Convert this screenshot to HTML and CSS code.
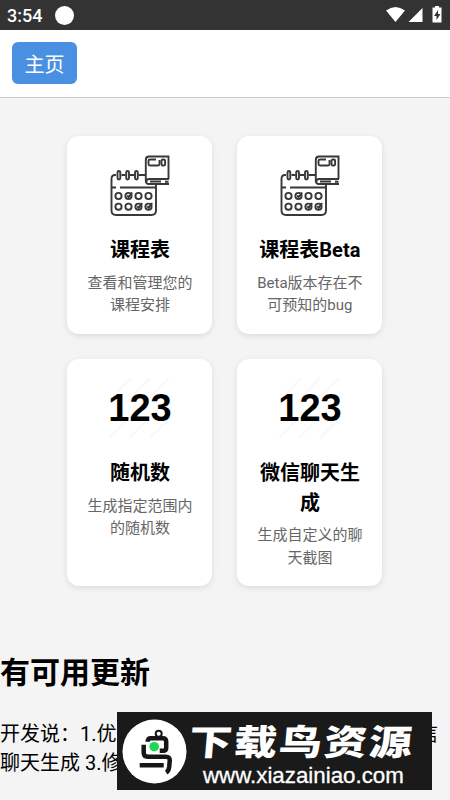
FILE: index.html
```html
<!DOCTYPE html>
<html lang="zh-CN">
<head>
    <meta charset="UTF-8">
    <meta name="viewport" content="width=device-width, initial-scale=1.0">
    <title>主页</title>
    <link rel="stylesheet" href="styles.css">
</head>
<body>
    <svg class="symbols" width="0" height="0">
        <symbol id="calendar" viewBox="-1 -1 62 62">
            <g fill="none" stroke="#383838" stroke-width="1.9">
                <path d="M6 20H5q-3.500 0-3.500 4V55.500q0 4.500 4.500 4.500H41.500q4.500 0 4.500-4.500V30M11.500 20h4M20 20h4M28.500 20h7M1.500 32.500H6M10 32.500H46"/>
                <rect x="7.500" y="16" width="2.800" height="8.500" rx="1.400"/>
                <rect x="16.200" y="16" width="2.800" height="8.500" rx="1.400"/>
                <rect x="25" y="16" width="2.800" height="8.500" rx="1.400"/>
                <circle cx="8.500" cy="41" r="3.100"/>
                <circle cx="18.500" cy="41" r="3.100"/>
                <circle cx="28.500" cy="41" r="3.100"/>
                <circle cx="38.500" cy="41" r="3.100"/>
                <circle cx="8.500" cy="51.700" r="3.100"/>
                <circle cx="18.500" cy="51.700" r="3.100"/>
                <circle cx="28.500" cy="51.700" r="3.100"/>
                <circle cx="38.500" cy="51.700" r="3.100"/>
                <path d="M17.200 40.500l1.500 1.500 3.500-4.500M27.200 51.200l1.500 1.500 3.500-4.500M37.200 51.200l1.500 1.500 3.500-4.500"/>
                <path fill="#fff" d="M58.500 24V1.500H39q-3.200 0-3.200 3.500V25.500q0 3.500 3 3.500H59"/>
                <path d="M59 24H39q-2.500 0-2.500 2.500M40 26.500H51M55 26.800h3.500" stroke-width="2"/>
                <path d="M46 4.500H40q-1.500 0-1.500 1.500v3q0 1.500 1.500 1.500h8q1.500 0 1.500-1.500V5"/>
                <rect x="51.500" y="4.500" width="3.600" height="6" rx="1.300"/>
            </g>
        </symbol>
        <symbol id="stripes" viewBox="0 0 62 62">
            <path d="M0 24L22 1M0 61L60 1M20 61L62 19M41 61L62 40M17 26L41 1" fill="none" stroke="#f8f8f8" stroke-width="2"/>
        </symbol>
    </svg>

    <div class="status-bar">
        <span class="time">3:54</span>
        <span class="dot"></span>
        <svg class="status-icons" width="58" height="18" viewBox="0 0 58 18" fill="#fff">
            <path d="M0 4.500Q9.500 -2.500 19 4.500L9.500 16Z"/>
            <path d="M36.500 2V16H22.500Z"/>
            <path d="M49 0h4v1.500h2.500V16.500h-9V1.500H49z"/>
            <path d="M52 4l-4 6h2.500v4l4-6H52z" fill="#333"/>
        </svg>
    </div>

    <header>
        <a class="home-btn">主页</a>
    </header>

    <div class="container">
        <div class="card">
            <svg class="card-icon"><use href="#calendar"/></svg>
            <h3>课程表</h3>
            <p>查看和管理您的课程安排</p>
        </div>
        <div class="card">
            <svg class="card-icon"><use href="#calendar"/></svg>
            <h3>课程表Beta</h3>
            <p>Beta版本存在不可预知的bug</p>
        </div>
        <div class="card">
            <svg class="card-icon"><use href="#stripes"/><text x="31" y="44" text-anchor="middle">123</text></svg>
            <h3>随机数</h3>
            <p>生成指定范围内的随机数</p>
        </div>
        <div class="card">
            <svg class="card-icon"><use href="#stripes"/><text x="31" y="44" text-anchor="middle">123</text></svg>
            <h3>微信聊天生成</h3>
            <p>生成自定义的聊天截图</p>
        </div>
    </div>

    <div class="update">
        <h2>有可用更新</h2>
        <div class="update-line"><span>开发说：1.优</span><span>信</span></div>
        <div class="update-line"><span>聊天生成 3.修</span></div>
    </div>

    <div class="banner">
        <svg class="banner-logo" width="65" height="65" viewBox="0 0 65 65">
            <circle cx="32.500" cy="32.500" r="32" fill="#fff"/>
            <g transform="translate(.7 .7)">
                <g fill="none" stroke="#161616" stroke-width="4.500">
                    <circle cx="36" cy="14" r="3" stroke-width="2"/>
                    <path d="M25 22q0-3.500 3-3.500H40q3.500 0 3.500 3.500V28q0 3-3 3H37"/>
                    <path d="M21 25V33q0 4 4 4H43q4.500 0 4 4.500L46.500 47q-.6 4.500-3 6M17 45.500H41"/>
                </g>
                <circle cx="31.500" cy="27" r="4.800" fill="#20d655"/>
            </g>
        </svg>
        <div class="banner-text">
            <div class="banner-name">下载鸟资源</div>
            <div class="banner-url">www.xiazainiao.com</div>
        </div>
    </div>
</body>
</html>
```
FILE: styles.css
```css
* {
    box-sizing: border-box;
}
body {
    font-family: Roboto, "Noto Sans CJK SC", sans-serif;
    margin: 0;
    height: 800px;
    overflow: hidden;
    background: #f4f4f4;
    color: #000;
    position: relative;
}
.symbols {
    position: absolute;
}
.status-bar {
    height: 30px;
    background: #333;
    color: #fff;
    display: flex;
    align-items: center;
    padding: 0 6px 0 7px;
}
.time {
    font-size: 18px;
    font-weight: 500;
    width: 48px;
    padding-top: 1px;
}
.dot {
    width: 19px;
    height: 19px;
    border-radius: 50%;
    background: #fff;
}
.status-icons {
    margin-left: auto;
}
header {
    height: 68px;
    padding: 12px;
    background: #fff;
    border-bottom: 1px solid #ccc;
}
.home-btn {
    display: flex;
    align-items: center;
    justify-content: center;
    width: 65px;
    height: 42px;
    border-radius: 6px;
    background: #4a90e2;
    color: #fff;
    font-size: 20px;
}
.container {
    display: grid;
    grid-template-columns: 145px 145px;
    gap: 25px;
    padding: 37.5px 0 0 67.4px;
}
.card {
    background: #fff;
    border-radius: 12px;
    padding: 18.5px;
    text-align: center;
    box-shadow: 0 2px 6px rgba(0, 0, 0, 0.1);
}
.card-icon {
    display: block;
    width: 62px;
    height: 62px;
    margin: 0 auto 20px;
    overflow: visible;
}
.card-icon text {
    font: bold 38px "Liberation Sans", Arial, sans-serif;
}
.card h3 {
    margin: 0 0 6px;
    font-size: 20px;
    line-height: 29.5px;
}
.card p {
    margin: 0 0 -1.5px;
    font-size: 15px;
    line-height: 22.5px;
    color: #666;
}
.update {
    padding-top: 64.5px;
}
.update h2 {
    margin: 0 0 25px;
    font-size: 30px;
    line-height: 44px;
}
.update-line {
    display: flex;
    justify-content: space-between;
    padding-right: 12px;
    font-size: 20px;
    line-height: 29.5px;
    white-space: pre;
}
.banner {
    position: absolute;
    left: 117px;
    top: 712px;
    width: 315px;
    height: 78px;
    padding-left: 5px;
    background: #1a1a1a;
    color: #fff;
    display: flex;
    align-items: center;
}
.banner-text {
    padding: 9px 0 0 2px;
}
.banner-name {
    font-size: 43px;
    font-weight: 900;
    line-height: 40px;
    transform: skewX(-5deg) scaleY(0.82);
    letter-spacing: 2px;
    white-space: nowrap;
}
.banner-url {
    font-family: "Liberation Sans", Arial, sans-serif;
    font-size: 22.3px;
    line-height: 26px;
    padding-left: 14px;
    -webkit-text-stroke: 0.3px #fff;
}
```
